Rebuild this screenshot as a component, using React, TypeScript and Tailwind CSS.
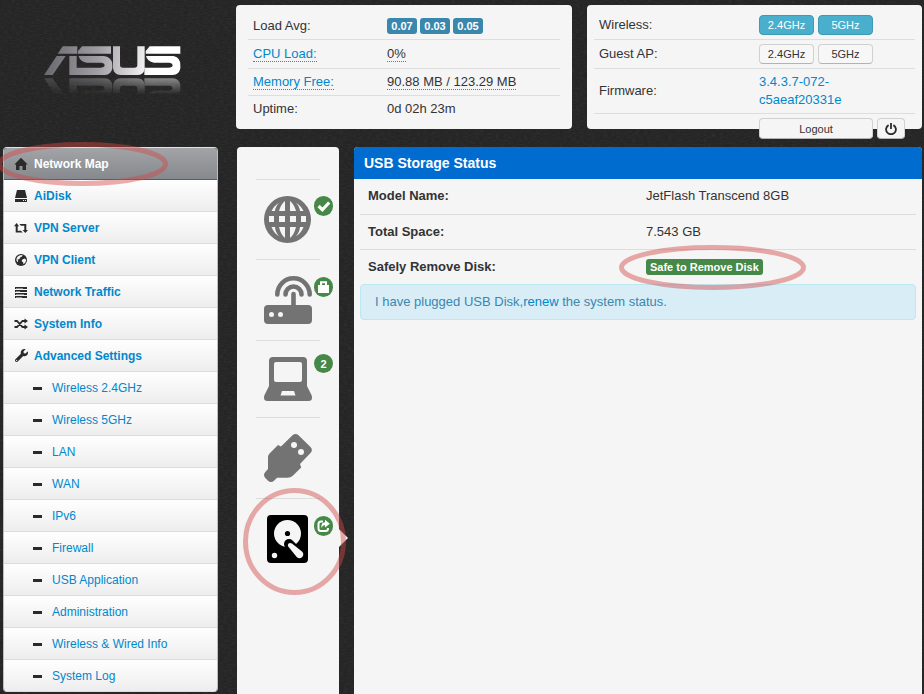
import type { ReactNode } from "react";
import { FaWrench } from "react-icons/fa";

function Backdrop() {
  return (
    <svg aria-hidden="true" className="absolute inset-0 -z-10 h-full w-full">
      <filter id="grain" x="0" y="0" width="100%" height="100%">
        <feTurbulence type="fractalNoise" baseFrequency="0.25 0.7" numOctaves="2" seed="4" />
        <feColorMatrix values="0 0 0 0 0.5  0 0 0 0 0.5  0 0 0 0 0.5  0.5 0 0 0 -0.18" />
      </filter>
      <rect width="100%" height="100%" fill="#252525" />
      <rect width="100%" height="100%" filter="url(#grain)" opacity="0.25" />
    </svg>
  );
}

function Logo() {
  return (
    <svg viewBox="126 135 426 150" className="h-[50px] w-[142px]" role="img" aria-label="ASUS">
      <defs>
        <linearGradient id="metal" gradientUnits="userSpaceOnUse" x1="132" y1="139" x2="541" y2="190">
          <stop offset="0" stopColor="#67656a" />
          <stop offset="0.15" stopColor="#7d7b81" />
          <stop offset="0.4" stopColor="#a09da3" />
          <stop offset="0.6" stopColor="#cfccd0" />
          <stop offset="0.8" stopColor="#ffffff" />
          <stop offset="1" stopColor="#ffffff" />
        </linearGradient>
        <linearGradient id="fade" gradientUnits="userSpaceOnUse" x1="0" y1="225" x2="0" y2="176">
          <stop offset="0" stopColor="#fff" stopOpacity="0.45" />
          <stop offset="1" stopColor="#fff" stopOpacity="0" />
        </linearGradient>
        <mask id="fadeMask" maskUnits="userSpaceOnUse" x="120" y="130" width="430" height="100">
          <rect x="120" y="130" width="430" height="100" fill="url(#fade)" />
        </mask>
        <g id="mark">
          <path d="M132 225L170 168H197L158 225Z" />
          <path d="M188 139H232V161H173Z" />
          <path d="M234 153L246 139H333V161H234Z" />
          <path d="M236 168H312Q337 172 337 195V205Q333 225 315 225H208V168H230V203H303Q314 202 314 195Q313 189 305 188H260Q238 184 236 168Z" />
          <path d="M339 139H360V195Q360 203 369 203H403Q412 203 412 195V139H434V206Q431 225 412 225H362Q341 224 339 204Z" />
          <path d="M437 153L449 139H541V161H437Z" />
          <path d="M438 168H520Q541 172 541 195V205Q538 225 518 225H433V203H505Q518 203 518 195Q517 189 508 188H462Q441 184 438 168Z" />
        </g>
      </defs>
      <use href="#mark" fill="url(#metal)" />
      <g transform="matrix(1 0 0 -1 0 460)">
        <g mask="url(#fadeMask)">
          <use href="#mark" fill="url(#metal)" />
        </g>
      </g>
    </svg>
  );
}

const mini = "h-[14px] w-[14px]";

const HomeGlyph = () => (
  <svg viewBox="0 0 14 14" className={mini} fill="#2b2b2b">
    <path d="M7 0.800L13.700 7.600H12V13H8.500V9H5.500V13H2V7.600H0.300z" />
  </svg>
);
const DiskGlyph = () => (
  <svg viewBox="0 0 14 14" className={mini} fill="#2b2b2b">
    <path d="M3 1h8l2 8H1z" />
    <path fillRule="evenodd" d="M1 10h12v3H1zM9 11v1h1v-1zM11 11v1h1v-1z" />
  </svg>
);
const RetweetGlyph = () => (
  <svg viewBox="0 0 14 14" className={mini} fill="#2b2b2b">
    <path d="M2.600 2L0 5.200h1.700V11.500h7L7 9.700H3.700V5.200h1.400zM5.300 3H12.300v6h1.700L11.300 12 8.600 9H10.300V4.800H7z" />
  </svg>
);
const GlobeGlyph = () => (
  <svg viewBox="0 0 14 14" className={mini}>
    <circle cx="7" cy="7" r="6" fill="#2b2b2b" />
    <path fill="#f4f4f4" d="M6 2.200L8.600 2 8 3.600 6.200 4.600 5.200 6.200 3.400 6.600 4.200 8 3.600 9.200 2.400 7.600 2.600 5.200 4 3.200zM8.600 6.200l2.400-.6 1.200 1.400-.8 2.600-1.800 1.600-.6-2-1.400-1.200z" />
  </svg>
);
const TasksGlyph = () => (
  <svg viewBox="0 0 14 14" className={mini} shapeRendering="crispEdges">
    <path fill="#2b2b2b" d="M1 2h12v2H1zM1 5h12v2H1zM1 8h12v2H1zM1 11h12v2H1z" />
    <path stroke="#8a8a8a" d="M2 3.500h7M2 6.500h4M2 9.500h8M2 12.500h6" strokeWidth="1" />
  </svg>
);
const ShuffleGlyph = () => (
  <svg viewBox="0 0 14 14" className={mini} fill="none" stroke="#2b2b2b" strokeWidth="1.8">
    <path d="M0.500 4H3l5.500 6H11M0.500 10H3l5.500-6H11" />
    <path d="M10.500 1.400L14 4l-3.500 2.600zM10.500 7.400L14 10l-3.500 2.600z" fill="#2b2b2b" stroke="none" />
  </svg>
);

const mainItems: { label: string; icon: ReactNode }[] = [
  { label: "AiDisk", icon: <DiskGlyph /> },
  { label: "VPN Server", icon: <RetweetGlyph /> },
  { label: "VPN Client", icon: <GlobeGlyph /> },
  { label: "Network Traffic", icon: <TasksGlyph /> },
  { label: "System Info", icon: <ShuffleGlyph /> },
  { label: "Advanced Settings", icon: <FaWrench size={13} color="#2b2b2b" /> },
];

const subItems = [
  "Wireless 2.4GHz",
  "Wireless 5GHz",
  "LAN",
  "WAN",
  "IPv6",
  "Firewall",
  "USB Application",
  "Administration",
  "Wireless & Wired Info",
  "System Log",
];

function Ring({ className, w, h }: { className: string; w: number; h: number }) {
  return (
    <svg aria-hidden="true" viewBox={`0 0 ${w} ${h}`} className={`pointer-events-none absolute z-10 ${className}`}>
      <ellipse
        cx={w / 2}
        cy={h / 2}
        rx={w / 2 - 2.5}
        ry={h / 2 - 2.5}
        fill="none"
        stroke="#d34648"
        strokeOpacity="0.45"
        strokeWidth="5"
      />
    </svg>
  );
}

function Sidebar() {
  const row = "flex h-[32px] items-center border-b border-[#dcdcdc] bg-linear-to-b from-white to-[#ededed] text-[#0088cc]";
  return (
    <nav className="relative w-[215px] shrink-0 self-start">
      <ul className="overflow-hidden rounded-[4px] border-x border-t border-[#bdbdbd] border-t-[#e2e2e2]">
        <li>
          <a
            href="#map"
            className="flex h-[32px] items-center gap-[6px] border-b border-[#5c5c5f] bg-linear-to-b from-[#a2a4a7] to-[#86898d] pl-[10px] text-[12px] font-bold text-white"
          >
            <HomeGlyph />
            Network Map
          </a>
        </li>
        {mainItems.map((item) => (
          <li key={item.label}>
            <a href="#menu" className={`${row} gap-[6px] pl-[10px] text-[12px] font-bold`}>
              <span className="flex w-[14px] justify-center">{item.icon}</span>
              {item.label}
            </a>
          </li>
        ))}
        {subItems.map((label) => (
          <li key={label}>
            <a href="#sub" className={`${row} gap-[10px] pl-[29px] text-[12px]`}>
              <span className="mt-[2px] h-[3px] w-[9px] bg-[#2b2b2b]" />
              {label}
            </a>
          </li>
        ))}
      </ul>
      <Ring className="top-[-5px] left-[-6px] h-[44px] w-[171px]" w={171} h={44} />
    </nav>
  );
}

function StatusPanel() {
  const label = "pl-[5px] text-left font-normal";
  const badge = "w-[30px] rounded-[3px] bg-[#3a87ad] text-center text-[11px] leading-[16px] font-bold text-white";
  return (
    <section className="h-[124px] w-[336px] shrink-0 rounded-[4px] bg-[#f5f5f5] px-3 pt-[6px]">
      <table className="w-full border-collapse">
        <tbody>
          <tr className="h-[28px] border-b border-[#dddddd]">
            <th scope="row" className={`${label} w-[134px] pt-[3px]`}>Load Avg:</th>
            <td className="pt-[3px] pl-[5px]">
              <span className="flex gap-[3px]">
                <span className={badge}>0.07</span>
                <span className={badge}>0.03</span>
                <span className={badge}>0.05</span>
              </span>
            </td>
          </tr>
          <tr className="h-[29px] border-b border-[#dddddd]">
            <th scope="row" className={label}>
              <a href="#cpu" className="border-b border-dotted border-[#3a87ad] text-[#0088cc]">CPU Load:</a>
            </th>
            <td className="pl-[5px]"><span className="border-b border-dotted border-[#3a87ad]">0%</span></td>
          </tr>
          <tr className="h-[27px] border-b border-[#dddddd]">
            <th scope="row" className={label}>
              <a href="#mem" className="border-b border-dotted border-[#3a87ad] text-[#0088cc]">Memory Free:</a>
            </th>
            <td className="pl-[5px]">
              <span className="border-b border-dotted border-[#3a87ad]">90.88 MB / 123.29 MB</span>
            </td>
          </tr>
          <tr className="h-[27px]">
            <th scope="row" className={label}>Uptime:</th>
            <td className="pl-[5px]">0d 02h 23m</td>
          </tr>
        </tbody>
      </table>
    </section>
  );
}

function ControlPanel() {
  const btn = "h-[20px] w-[55px] rounded-[4px] border text-[11px] leading-[18px]";
  const on = `${btn} border-[#3d9ab5] bg-[#49afcd] text-white`;
  const off = `${btn} border-[#d0d0d0] border-b-[#b3b3b3] bg-[#f7f7f7]`;
  return (
    <section className="h-[124px] min-w-0 flex-1 rounded-[4px] bg-[#f5f5f5] px-[7px] pt-[6px]">
      <div className="flex h-[29px] items-center border-b border-[#dddddd]">
        <span className="w-[165px] shrink-0 pl-[5px]">Wireless:</span>
        <span className="flex gap-1">
          <button type="button" className={on}>2.4GHz</button>
          <button type="button" className={on}>5GHz</button>
        </span>
      </div>
      <div className="flex h-[29px] items-center border-b border-[#dddddd]">
        <span className="w-[165px] shrink-0 pl-[5px]">Guest AP:</span>
        <span className="flex gap-1">
          <button type="button" className={off}>2.4GHz</button>
          <button type="button" className={off}>5GHz</button>
        </span>
      </div>
      <div className="flex h-[45px] items-center border-b border-[#dddddd]">
        <span className="w-[165px] shrink-0 pl-[5px]">Firmware:</span>
        <a href="#fw" className="leading-[18px] text-[#0088cc]">
          3.4.3.7-072-
          <br />
          c5aeaf20331e
        </a>
      </div>
      <div className="flex gap-1 pt-1 pl-[165px]">
        <button type="button" className="h-[21px] w-[114px] shrink-0 rounded-[4px] border border-[#d0d0d0] border-b-[#b3b3b3] bg-[#f5f5f5] text-[11px] leading-[18px]">
          Logout
        </button>
        <button
          type="button"
          aria-label="Power"
          className="flex h-[21px] w-[28px] shrink-0 items-center justify-center rounded-[4px] border border-[#d0d0d0] border-b-[#b3b3b3] bg-[#f5f5f5]"
        >
          <svg viewBox="0 0 12 12" className="h-[12px] w-[12px]" fill="none" stroke="#2b2b2b" strokeWidth="1.8">
            <path d="M3.600 2.100a4.900 4.900 0 1 0 4.800 0M6 0v6" />
          </svg>
        </button>
      </div>
    </section>
  );
}

const GREY = "#737373";

const WorldIcon = () => (
  <svg viewBox="0 0 48 48" className="h-[48px] w-[48px]">
    <circle cx="23.500" cy="23.500" r="23.500" fill={GREY} />
    <g fill="#f5f5f5">
      <path d="M21 5v10h-6Q17 8 21 5zM26 5v10h6Q30 8 26 5zM21 42V31h-6Q17 39 21 42zM26 42V31h6Q30 39 26 42z" />
      <path d="M15 20h6v6h-6zM26 20h6v6h-6zM5 20h5v6H5zM37 20h5v6h-5z" />
      <path d="M15.500 6.500Q11.500 10 11 15H7.500Q10 9.500 15.500 6.500zM31.500 6.500Q35.500 10 36 15h3.500Q37 9.500 31.500 6.500zM15.500 40.500Q11.500 37 11 31H7.500Q10 37.500 15.500 40.500zM31.500 40.500Q35.500 37 36 31h3.500Q37 37.500 31.500 40.500z" />
    </g>
  </svg>
);

const RouterIcon = () => (
  <svg viewBox="0 0 48 48" className="h-[48px] w-[48px]">
    <rect x="0" y="29" width="48" height="19" rx="4" fill={GREY} />
    <circle cx="7.500" cy="38.500" r="2.500" fill="#f5f5f5" />
    <circle cx="16.500" cy="38.500" r="2.500" fill="#f5f5f5" />
    <g fill="none" stroke={GREY} strokeWidth="4.600" strokeLinecap="round">
      <path d="M29.500 18v13M21.500 18.500a8 8 0 0 1 16 0M13.300 18.500a16.200 16.200 0 0 1 32.400 0" />
    </g>
  </svg>
);

const LaptopIcon = () => (
  <svg viewBox="0 0 48 48" className="h-[48px] w-[48px]" fill={GREY}>
    <path
      fillRule="evenodd"
      d="M9 0h30q4 0 4 4v25l4.500 9q.5 1 .5 3 0 3-3.500 3h-41Q0 44 0 41q0-2 .5-3L5 29V4q0-4 4-4zM12 5q-2 0-2 2v16q0 2 2 2h24q2 0 2-2V7q0-2-2-2zM18 34l-1.500 4.500h15L30 34z"
    />
  </svg>
);

const UsbIcon = () => (
  <svg viewBox="0 0 48 48" className="h-[48px] w-[48px]">
    <path
      fill={GREY}
      d="M28.500 1.200q3-2.400 6 0L46.500 13q2.800 3 0 6L36 30l1.200 3.500-8.700 8.500q-2 1.800-5 1.800H13L10 46.700q-3 2.600-6 0l-2.700-2.700q-2.600-3 0-6L4 35V23q0-2 1.500-3.500L14 11l3 1.500z"
    />
    <circle cx="30" cy="11" r="3" fill="#f5f5f5" />
    <circle cx="37" cy="18" r="3" fill="#f5f5f5" />
  </svg>
);

const DriveIcon = () => (
  <svg viewBox="0 0 48 48" className="h-[48px] w-[48px]">
    <rect x="3" y="0" width="41" height="48" rx="4" fill="#000" />
    <circle cx="23.500" cy="18.500" r="13.500" fill="#f5f5f5" />
    <circle cx="23.500" cy="18.500" r="2.600" fill="#000" />
    <path d="M25 29L36 40" stroke="#000" strokeWidth="10" strokeLinecap="round" />
    <path d="M24.500 28.600q1.700-1.400 3.400 0L38 36.500q2.500 2.700.3 5.400-2.800 2.600-5.600 0L24.200 31.500q-.9-1.600.3-2.900z" fill="#f5f5f5" />
    <circle cx="10.500" cy="40.500" r="2.700" fill="#f5f5f5" />
  </svg>
);

const CheckGlyph = () => (
  <svg viewBox="0 0 19 20" className="h-[20px] w-[19px]" fill="none" stroke="#fff" strokeWidth="3.200">
    <path d="M4.600 10l3.800 3.800 6.800-7.300" />
  </svg>
);
const LockGlyph = () => (
  <svg viewBox="0 0 19 20" className="h-[20px] w-[19px]">
    <path d="M4 8h11v8H4z" fill="#fff" />
    <path d="M7 8V5.200h5V8" fill="none" stroke="#fff" strokeWidth="2" />
  </svg>
);
const ShareGlyph = () => (
  <svg viewBox="0 0 19 20" className="h-[20px] w-[19px]">
    <path d="M9 5.500H7Q4.500 5.500 4.500 8v4.500Q4.500 15 7 15h4.500Q14 15 14 12.500V12" fill="none" stroke="#fff" strokeWidth="2" />
    <path d="M11 3.800L15.800 7.800 11 11.400V9Q8.600 9 7.500 12 6.800 6.300 11 6.200z" fill="#fff" />
  </svg>
);

const devices: { name: string; icon: ReactNode; badge?: ReactNode; size: string; badgeAt?: string }[] = [
  { name: "Internet", icon: <WorldIcon />, badge: <CheckGlyph />, size: "h-[80px]", badgeAt: "top-[17px] h-[20px]" },
  { name: "Router", icon: <RouterIcon />, badge: <LockGlyph />, size: "h-[81px]", badgeAt: "top-[18px] h-[20px]" },
  { name: "Clients", icon: <LaptopIcon />, badge: "2", size: "h-[77px]", badgeAt: "top-[14px] h-[19px]" },
  { name: "USB", icon: <UsbIcon />, size: "h-[81px]" },
  { name: "Storage", icon: <DriveIcon />, badge: <ShareGlyph />, size: "h-[81px]", badgeAt: "top-[18px] h-[20px]" },
];

function DeviceColumn() {
  return (
    <div className="w-[102px] shrink-0 rounded-t-[4px] bg-[#f5f5f5] pt-[32px]">
      {devices.map((d) => (
        <div key={d.name} className={`relative ${d.size}`}>
          <div className="mx-auto h-px w-[64px] bg-[#dddddd]" />
          <button type="button" aria-label={d.name} className="mt-[16px] ml-[27px] block">
            {d.icon}
          </button>
          {d.badge && (
            <span
              className={`absolute left-[77px] flex w-[19px] items-center justify-center rounded-full bg-[#468847] text-[11px] font-bold text-white ${d.badgeAt}`}
            >
              {d.badge}
            </span>
          )}
          {d.name === "Storage" && (
            <>
              <span className="absolute top-[31px] left-[102px] border-y-[9px] border-l-[9px] border-y-transparent border-l-[#f5f5f5]" />
              <Ring className="top-[-10px] left-[6px] h-[107px] w-[103px]" w={103} h={107} />
            </>
          )}
        </div>
      ))}
    </div>
  );
}

function StoragePanel() {
  const head = "pl-2 text-left font-bold";
  return (
    <main className="min-w-0 flex-1 rounded-t-[4px] bg-[#f5f5f5]">
      <h1 className="h-[32px] rounded-t-[4px] bg-[#006ccf] pl-[10px] text-[14px] leading-[32px] font-bold text-white">
        USB Storage Status
      </h1>
      <div className="px-[6px]">
        <table className="w-full table-fixed border-collapse">
          <tbody>
            <tr className="h-[35px] border-b border-[#dddddd]">
              <th scope="row" className={head}>Model Name:</th>
              <td className="pl-2">JetFlash Transcend 8GB</td>
            </tr>
            <tr className="h-[35px] border-b border-[#dddddd]">
              <th scope="row" className={head}>Total Space:</th>
              <td className="pl-2">7.543 GB</td>
            </tr>
            <tr className="h-[35px]">
              <th scope="row" className={head}>Safely Remove Disk:</th>
              <td className="pl-2">
                <span className="relative inline-block">
                  <button type="button" className="block rounded-[3px] bg-[#468847] px-1 text-[11px] leading-[16px] font-bold text-white">
                    Safe to Remove Disk
                  </button>
                  <Ring className="top-[-14px] left-[-27px] h-[45px] w-[187px] max-w-none" w={187} h={45} />
                </span>
              </td>
            </tr>
          </tbody>
        </table>
        <p className="flex h-[36px] items-center rounded-[4px] border border-[#bce8f1] bg-[#d9edf7] pl-[14px] text-[#3a87ad]">
          <span>
            I have plugged USB Disk,<a href="#renew" className="text-[#0088cc]">renew</a> the system status.
          </span>
        </p>
      </div>
    </main>
  );
}

export default function App() {
  return (
    <div className="relative isolate flex min-h-screen flex-col gap-[18px] overflow-hidden bg-[#272727] pt-[5px] pr-[2px] pl-[3px] font-['Liberation_Sans',Arial,sans-serif] text-[13px] leading-[18px] text-[#333333]">
      <Backdrop />
      <header className="flex">
        <div className="w-[233px] shrink-0 pt-[40px] pl-[39px]">
          <Logo />
        </div>
        <div className="flex min-w-0 flex-1 gap-[15px]">
          <StatusPanel />
          <ControlPanel />
        </div>
      </header>
      <div className="flex flex-1">
        <Sidebar />
        <div className="ml-[19px] flex min-w-0 flex-1 gap-[15px]">
          <DeviceColumn />
          <StoragePanel />
        </div>
      </div>
    </div>
  );
}
